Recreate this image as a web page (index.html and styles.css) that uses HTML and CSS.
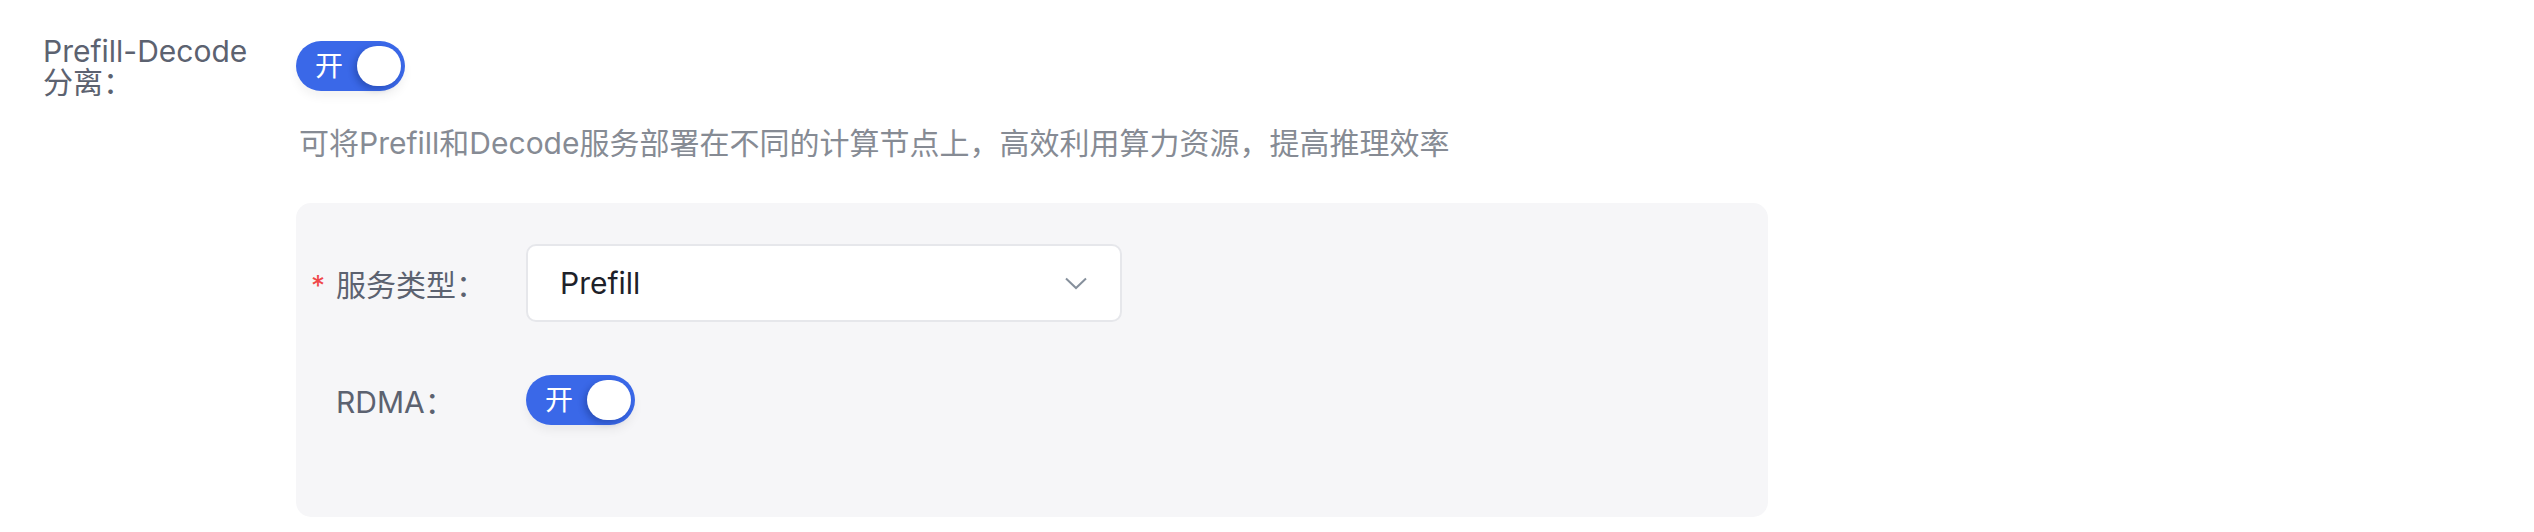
FILE: index.html
```html
<!DOCTYPE html>
<html lang="zh-CN">
<head>
  <meta charset="UTF-8" />
  <title>Prefill-Decode 分离</title>
  <link rel="stylesheet" href="styles.css">
</head>
<body>
<div class="form">
  <div class="item">
    <div class="label"><span class="label-text">Prefill-Decode分离：</span></div>
    <div class="control">
      <button class="switch"><span class="switch-text">开</span><span class="knob"></span></button>
      <div class="hint">可将Prefill和Decode服务部署在不同的计算节点上，高效利用算力资源，提高推理效率</div>

      <div class="panel">
        <div class="row">
          <div class="plabel"><span class="req">*</span>服务类型：</div>
          <div class="select">
            <span class="select-value">Prefill</span>
            <svg class="arrow" width="22" height="13" viewBox="0 0 22 13"><path d="M1 1.5 L11 11 L21 1.5" fill="none" stroke="#86909c" stroke-width="2"/></svg>
          </div>
        </div>
        <div class="row row-rdma">
          <div class="plabel"><span class="req"></span>RDMA：</div>
          <button class="switch"><span class="switch-text">开</span><span class="knob"></span></button>
        </div>
      </div>
    </div>
  </div>
</div>
</body>
</html>
```

FILE: styles.css
```css
* { box-sizing: border-box; }
body {
  margin: 0;
  background: #fff;
  font-family: Inter, "Noto Sans CJK SC", sans-serif;
  color: #4e5969;
}
.form {
  padding: 36px 0 0 43px;
}
.item {
  display: flex;
  align-items: flex-start;
}
.label {
  flex: none;
  width: 253px;
  font-size: 30px;
  line-height: 31px;
  color: #5c6270;
}
.label-text {
  display: block;
  width: 215px;
}
.control {
  display: flex;
  flex-direction: column;
  align-items: flex-start;
}
.switch {
  display: flex;
  align-items: center;
  justify-content: space-between;
  width: 109px;
  height: 50px;
  margin-top: 5px;
  padding: 0 4px 0 19px;
  border: none;
  border-radius: 25px;
  background: #3a68e8;
  font-family: inherit;
  cursor: pointer;
  box-shadow: 0 6px 10px rgba(0, 0, 0, 0.05);
}
.switch-text {
  color: #fff;
  font-size: 28px;
  line-height: 1;
}
.knob {
  width: 44px;
  height: 40px;
  border-radius: 20px;
  background: #fff;
  box-shadow: -3px 3px 6px rgba(10, 30, 90, 0.3);
}
.hint {
  margin-top: 32px;
  padding-left: 3px;
  font-size: 30px;
  line-height: 40px;
  color: #868b94;
}
.panel {
  width: 1472px;
  margin-top: 40px;
  padding: 41px 15px 92px;
  background: #f6f6f8;
  border-radius: 15px;
}
.row {
  display: flex;
  align-items: center;
}
.row-rdma {
  margin-top: 53px;
}
.row-rdma .switch { margin-top: 0; }
.plabel {
  display: flex;
  align-items: center;
  width: 215px;
  font-size: 30px;
  color: #5c6270;
}
.req {
  width: 25px;
  color: #f0474a;
  font-size: 28px;
  padding-top: 6px;
}
.select {
  display: flex;
  align-items: center;
  justify-content: space-between;
  width: 596px;
  height: 78px;
  padding: 0 33px 0 32px;
  background: #fff;
  border: 2px solid #e6e7eb;
  border-radius: 10px;
}
.select-value {
  font-size: 30px;
  color: #1d2129;
}
```
